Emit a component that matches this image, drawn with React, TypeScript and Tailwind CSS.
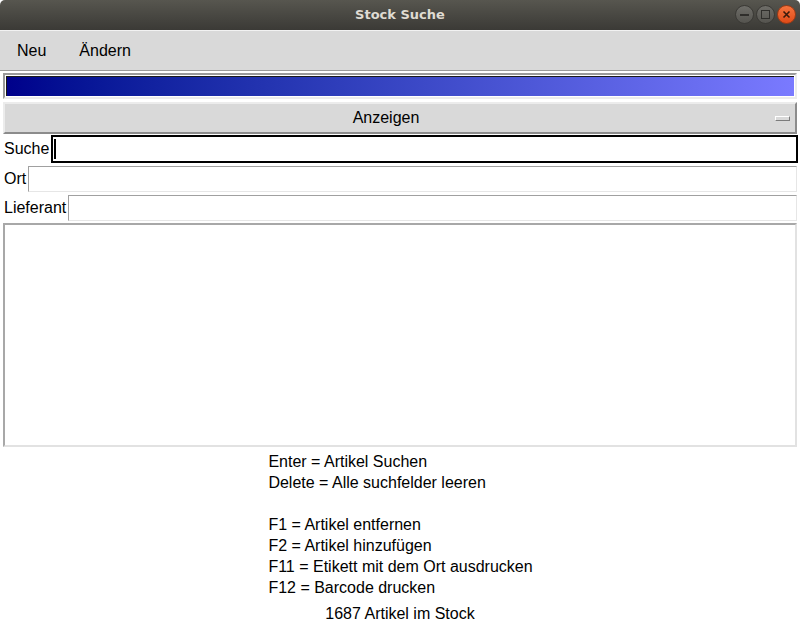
import React from "react";

const font = { fontFamily: '"Liberation Sans", Arial, sans-serif' };

export default function App() {
  return (
    <div className="w-[800px] h-[630px] bg-white flex flex-col overflow-hidden" style={font}>
      {/* Title bar */}
      <div className="h-[30px] shrink-0 relative flex items-center justify-center rounded-t-[5px] bg-gradient-to-b from-[#57564f] to-[#3b3a36]">
        <span className="text-[13px] font-bold text-[#dfdbd2]" style={{ fontFamily: '"DejaVu Sans", sans-serif' }}>
          Stock Suche
        </span>
        <div className="absolute right-[4px] top-[5px] flex gap-[2px]">
          <div className="w-[19px] h-[19px] rounded-full bg-gradient-to-b from-[#6e6d68] to-[#55544f] border border-[#3a3935] flex items-center justify-center">
            <div className="w-[9px] h-[2px] bg-[#2f2e2b]" />
          </div>
          <div className="w-[19px] h-[19px] rounded-full bg-gradient-to-b from-[#6e6d68] to-[#55544f] border border-[#3a3935] flex items-center justify-center">
            <div className="w-[9px] h-[9px] border-[1.5px] border-[#2f2e2b]" />
          </div>
          <div className="w-[19px] h-[19px] rounded-full bg-gradient-to-b from-[#f4733d] to-[#df4a16] border border-[#9e3a14] flex items-center justify-center">
            <svg width="9" height="9" viewBox="0 0 9 9">
              <path d="M1.5 1.5 L7.5 7.5 M7.5 1.5 L1.5 7.5" stroke="#3b1a0c" strokeWidth="1.6" />
            </svg>
          </div>
        </div>
      </div>

      {/* Menu bar */}
      <div className="h-[41px] shrink-0 bg-[#d9d9d9] border-t border-t-[#f2f2f2] border-b border-b-[#9b9b9b] flex items-center pl-[17px] gap-[33px] text-[16px] text-black">
        <span>Neu</span>
        <span>Ändern</span>
      </div>

      {/* Progress bar */}
      <div className="mx-[3px] mt-[2px] h-[26px] shrink-0 border-2 border-t-[#9a9a9a] border-l-[#9a9a9a] border-b-[#ececec] border-r-[#ececec] bg-white p-[1px]">
        <div className="w-full h-full bg-gradient-to-r from-[#00008b] to-[#7a7aff] border-t border-l border-[#1a1a1a] border-b-0 border-r-0" />
      </div>

      {/* Anzeigen menubutton */}
      <div className="mx-[3px] mt-[3px] h-[32px] shrink-0 bg-[#d9d9d9] border-2 border-t-[#ececec] border-l-[#ececec] border-b-[#8c8c8c] border-r-[#8c8c8c] flex items-center text-[16px] text-black">
        <div className="flex-1 text-center pr-[8px]">Anzeigen</div>
        <div className="w-[15px] h-[5px] mr-[5px] bg-[#d9d9d9] border border-t-white border-l-white border-b-[#7c7c7c] border-r-[#7c7c7c]" />
      </div>

      {/* Suche */}
      <div className="mt-[1px] h-[28px] shrink-0 flex items-center pl-[4px] gap-[2px] pr-[2px] text-[16px] text-black">
        <span>Suche</span>
        <div className="flex-1 h-[28px] border-2 border-black bg-white flex items-center pl-[1px]">
          <div className="w-[2px] h-[20px] bg-black" />
        </div>
      </div>

      {/* Ort */}
      <div className="mt-[3px] h-[26px] shrink-0 flex items-center pl-[4px] gap-[2px] pr-[3px] text-[16px] text-black">
        <span>Ort</span>
        <div className="flex-1 h-[26px] border border-t-[#a0a0a0] border-l-[#a0a0a0] border-b-[#e6e6e6] border-r-[#e6e6e6] bg-white" />
      </div>

      {/* Lieferant */}
      <div className="mt-[3px] h-[26px] shrink-0 flex items-center pl-[4px] gap-[2px] pr-[3px] text-[16px] text-black">
        <span>Lieferant</span>
        <div className="flex-1 h-[26px] border border-t-[#a0a0a0] border-l-[#a0a0a0] border-b-[#e6e6e6] border-r-[#e6e6e6] bg-white" />
      </div>

      {/* Listbox */}
      <div className="mx-[3px] mt-[2px] h-[224px] shrink-0 border-2 border-t-[#a8a8a8] border-l-[#a8a8a8] border-b-[#e2e2e2] border-r-[#e2e2e2] bg-white" />

      {/* Help text */}
      <div className="mt-[4px] flex justify-center text-[16px] leading-[21px] text-black">
        <div className="flex flex-col pl-[1px]">
          <span>Enter = Artikel Suchen</span>
          <span>Delete = Alle suchfelder leeren</span>
          <span>&nbsp;</span>
          <span>F1 = Artikel entfernen</span>
          <span>F2 = Artikel hinzufügen</span>
          <span>F11 = Etikett mit dem Ort ausdrucken</span>
          <span>F12 = Barcode drucken</span>
        </div>
      </div>

      <div className="mt-[5px] text-center text-[16px] leading-[21px] text-black">1687 Artikel im Stock</div>
    </div>
  );
}
